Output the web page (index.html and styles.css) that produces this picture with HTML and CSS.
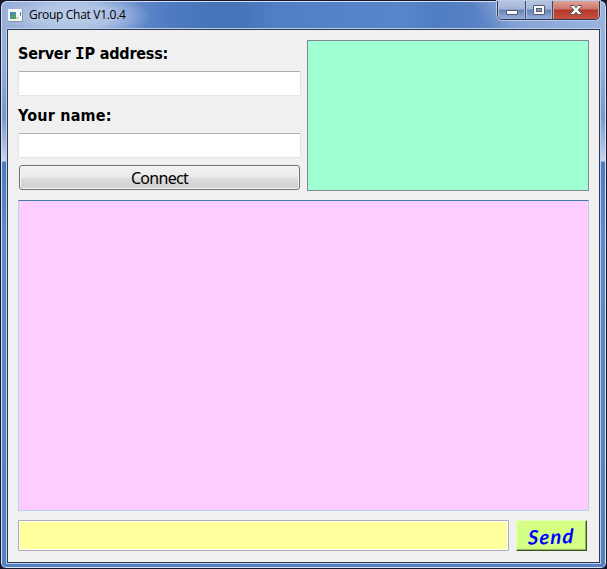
FILE: index.html
```html
<!DOCTYPE html>
<html lang="en">
<head>
<meta charset="utf-8">
<title>Group Chat V1.0.4</title>
<link rel="stylesheet" href="styles.css">
</head>
<body>
<div class="window">
  <header class="titlebar">
    <svg class="app-icon" width="15" height="13" viewBox="0 0 15 13" shape-rendering="crispEdges">
      <rect width="15" height="13" fill="#8d929d"/>
      <rect x="0" y="0" width="14" height="12" fill="#f4f6f7"/>
      <rect x="2" y="3" width="6" height="7" fill="#4f96a0"/>
      <rect x="2" y="3" width="3" height="4" fill="#4b86b4"/>
      <rect x="4" y="6" width="4" height="4" fill="#55a06a"/>
      <rect x="8" y="8" width="3" height="2" fill="#d2d5d4"/>
      <rect x="12" y="3" width="1" height="2" fill="#3d74b4"/>
      <rect x="12" y="5" width="1" height="2" fill="#5b9b73"/>
    </svg>
    <span class="title">Group Chat V1.0.4</span>
    <div class="controls">
      <button class="control" aria-label="Minimize">
        <svg width="12" height="5" viewBox="0 0 12 5"><rect x=".5" y=".5" width="11" height="4" rx=".5" fill="#f8f8f8" stroke="#535b70"/></svg>
      </button>
      <button class="control control-max" aria-label="Maximize">
        <svg width="12" height="10" viewBox="0 0 12 10"><rect x=".5" y=".5" width="11" height="9" rx=".5" fill="#f8f8f8" stroke="#535b70"/><rect x="3.5" y="3.5" width="5" height="3" fill="#7e9bcb" stroke="#535b70"/></svg>
      </button>
      <button class="control control-close" aria-label="Close">
        <svg width="12" height="10" viewBox="0 0 12 10"><path d="M.6.5H4L6 2.7 8 .5h3.4v1L8.2 5l3.2 3.4v1.1H8L6 7.3 4 9.5H.6V8.4L3.8 5 .6 1.5z" fill="#f8f8f8" stroke="#58536a"/></svg>
      </button>
    </div>
  </header>
  <main class="client">
    <section class="top">
      <form class="login">
        <label class="label label-server" for="server">Server <span class="slab">I</span>P address:</label>
        <input class="field" id="server" type="text">
        <label class="label label-name" for="name">Your name:</label>
        <input class="field" id="name" type="text">
        <button class="connect" type="button"><span>Connect</span></button>
      </form>
      <div class="users"></div>
    </section>
    <section class="chat"></section>
    <footer class="composer">
      <input class="message" type="text" aria-label="Message">
      <button class="send" type="button"><span>Send</span></button>
    </footer>
  </main>
</div>
</body>
</html>
```
FILE: styles.css
```css
* { box-sizing: border-box; }

body {
  margin: 0;
  background: #17182a;
}

button, input {
  margin: 0;
  padding: 0;
  border-radius: 0;
  outline: none;
}

.window {
  display: flex;
  flex-direction: column;
  width: 607px;
  height: 569px;
  padding: 0 5px 5px;
  border: 1px solid #17182e;
  border-radius: 7px 7px 6px 6px;
  box-shadow: inset 0 0 0 1px #d3e3f5;
  background:
    radial-gradient(ellipse 76px 24px at 74px 15px, #c4d3ece0 0, #c4d3ecb0 50%, transparent 100%) 0 0 / 100% 28px no-repeat,
    linear-gradient(55deg, transparent 0 400px, #88a4d7 430px, #9bb4df 500px) 0 0 / 100% 28px no-repeat,
    linear-gradient(90deg, #98afd9 0, #8aa5d6 60px, #6e92cf 120px, #4f7cc2 165px, #4674b9 210px 240px, #507fc6 275px, #5886cb 400px, #4f7dc1 435px, #5781c3 470px, #95addb 600px) 0 0 / 100% 28px no-repeat,
    linear-gradient(#a1b5da 0, #8eabd9 75px, #7897cb 115px, #b4c5e5 150px, #c9d7ef 160px, #4d7bc2 161px, #5d89ce 230px, #5780c3 100%);
}

.titlebar {
  display: flex;
  flex: none;
  height: 27px;
  padding-left: 2px;
}

.app-icon {
  flex: none;
  margin-top: 8px;
}

.title {
  width: 110px;
  height: 20px;
  margin: 4px 0 0 6px;
  font: 12px/20px "Open Sans", "Noto Sans", sans-serif;
  letter-spacing: -0.3px;
  white-space: nowrap;
  color: #000;
}

.controls {
  display: flex;
  height: 19px;
  margin: 0 1px 0 auto;
  border: 1px solid #30394f;
  border-top: 0;
  border-radius: 0 0 5px 5px;
  box-shadow: 0 0 0 1px #b9cbe8;
  overflow: hidden;
}

.control {
  display: flex;
  align-items: center;
  justify-content: center;
  width: 28px;
  height: 18px;
  border: 0;
  border-right: 1px solid #3d4965;
  background: linear-gradient(#b8c5df 0, #a3b5d8 8px, #6682b4 9px, #96b0dd 100%);
  box-shadow: inset 1px 0 #b9c8e3, inset -1px 0 #a9bbda;
}

.control:first-child { padding-top: 5px; }

.control-max { width: 27px; }

.control-close {
  width: 46px;
  border-right: 0;
  background: linear-gradient(#dda397 0, #ce7467 8px, #b53727 9px, #c45243 100%);
  box-shadow: inset 1px 0 #d69a90, inset -1px 0 #d99f95;
}

.client {
  display: flex;
  flex: 1;
  flex-direction: column;
  min-height: 0;
  padding: 10px;
  margin: 1px 1px 0;
  border: 1px solid #303a55;
  box-shadow: 0 0 0 1px #b6cfe7;
  background: #f0f0f0;
}

.top {
  display: flex;
  flex: none;
  gap: 6px;
  height: 151px;
}

.login {
  display: flex;
  flex-direction: column;
  width: 283px;
}

.label {
  display: block;
  color: #000;
  font: bold 16px/25px "DejaVu Sans Condensed", "DejaVu Sans", sans-serif;
  letter-spacing: -0.2px;
  white-space: nowrap;
}

.label-server { height: 31px; padding-top: 1px; }

.slab { font-family: "DejaVu Sans Mono", monospace; }

.label-name {
  height: 37px;
  padding-top: 7px;
  letter-spacing: 0.2px;
}

.field {
  width: 283px;
  height: 25px;
  border: 1px solid #e2e3ea;
  border-top-color: #abadb3;
  border-radius: 2px;
  background: #fff;
}

.connect {
  height: 25px;
  margin: 7px 1px 0;
  border: 1px solid #707070;
  border-radius: 3px;
  box-shadow: inset 0 0 0 1px #f7f7f7;
  background: linear-gradient(#f2f2f2 0, #ebebeb 11px, #dddddd 12px, #cfcfcf 100%);
  color: #000;
  font: 16px/22px "Noto Sans", sans-serif;
  letter-spacing: -0.7px;
}

.users {
  flex: 1;
  border: 1px solid #828790;
  background: #9dffd2;
}

.chat {
  flex: none;
  height: 311px;
  margin-top: 9px;
  border: 1px solid #b5d4ec;
  border-top-color: #3d7bad;
  background: #ffccff;
}

.composer {
  display: flex;
  gap: 7px;
  height: 31px;
  margin-top: 9px;
}

.message {
  width: 491px;
  border: 1px solid #abadb3;
  border-radius: 1px;
  box-shadow: inset 0 0 0 1px #fff;
  background: #ffff9b;
}

.send {
  width: 71px;
  border: 1px solid #e6ffc0;
  border-right-color: #3f4f24;
  border-bottom-color: #3f4f24;
  box-shadow: inset -1px -1px #93b760;
  background: #d5ff84;
  color: #0000ff;
  font: italic bold 20px/28px Lato, sans-serif;
  letter-spacing: 1.2px;
}

.send span {
  display: inline-block;
  transform: rotate(-2deg) skewX(-4deg);
}
```
